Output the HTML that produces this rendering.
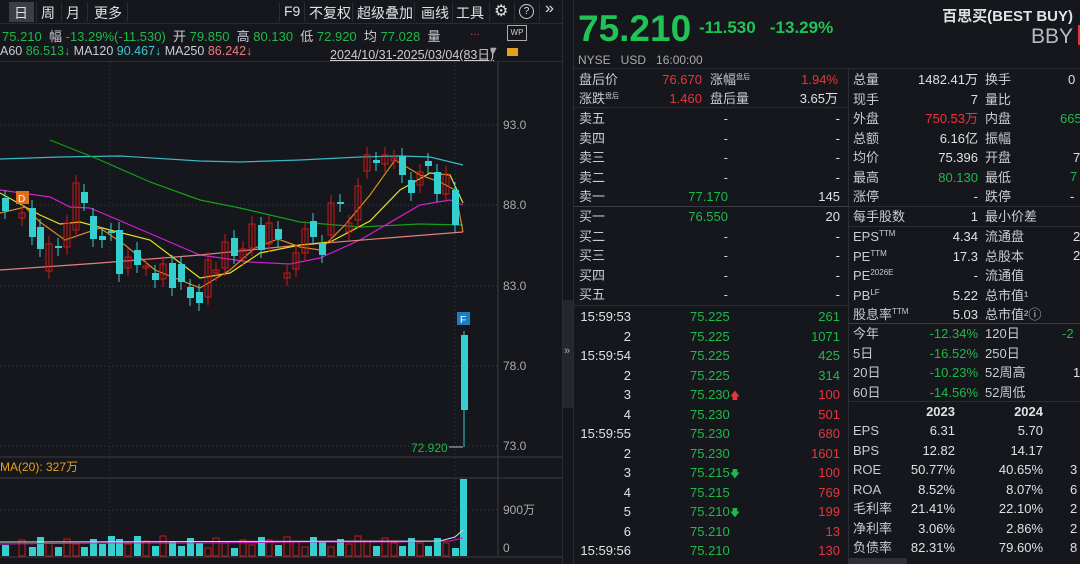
<!DOCTYPE html><html><head><meta charset="utf-8"><style>
body{margin:0;width:1080px;height:564px;background:#15171c;overflow:hidden;font-family:"Liberation Sans","Noto Sans CJK SC",sans-serif;color:#c9ccd1;position:relative}
.a{position:absolute;white-space:nowrap}
.g{color:#1fb84a}.r{color:#e8353b}.w{color:#dfe1e4}
.row{position:absolute;height:19px;font-size:13px;line-height:19px;overflow:visible}
sup{font-size:8px;line-height:0;vertical-align:5px}
.sep{position:absolute;top:2px;width:1px;height:20px;background:#2a2d33}
.tb{position:absolute;top:3px;font-size:14px;color:#dfe1e4}
</style></head><body>
<div class="a" style="left:0;top:0;width:562px;height:23px;background:#15171c;border-bottom:1px solid #2a2d33"></div>
<div class="a" style="left:9px;top:2px;width:25px;height:20px;background:#3a3e46"></div>
<div class="tb" style="left:14px">日</div>
<div class="sep" style="left:36px"></div>
<div class="tb" style="left:41px">周</div>
<div class="sep" style="left:61px"></div>
<div class="tb" style="left:66px">月</div>
<div class="sep" style="left:87px"></div>
<div class="tb" style="left:94px">更多</div>
<div class="sep" style="left:127px"></div>
<div class="sep" style="left:279px"></div>
<div class="tb" style="left:284px">F9</div>
<div class="sep" style="left:304px"></div>
<div class="tb" style="left:309px">不复权</div>
<div class="sep" style="left:352px"></div>
<div class="tb" style="left:357px">超级叠加</div>
<div class="sep" style="left:414px"></div>
<div class="tb" style="left:421px">画线</div>
<div class="sep" style="left:452px"></div>
<div class="tb" style="left:456px">工具</div>
<div class="sep" style="left:489px"></div>
<div class="a w" style="left:494px;top:1px;font-size:16px">⚙</div>
<div class="sep" style="left:514px"></div>
<div class="a w" style="left:519px;top:4px;border:1.5px solid #ccc;border-radius:50%;width:13px;height:13px;line-height:13px;text-align:center;font-size:10px">?</div>
<div class="sep" style="left:539px"></div>
<div class="a w" style="left:545px;top:0px;font-size:16px">»</div>
<div class="a" style="top:26px;left:2px;font-size:13px"><span class="g">75.210</span>&nbsp; 幅 <span class="g">-13.29%(-11.530)</span>&nbsp; 开 <span class="g">79.850</span>&nbsp; 高 <span class="g">80.130</span>&nbsp; 低 <span class="g">72.920</span>&nbsp; 均 <span class="g">77.028</span>&nbsp; 量</div>
<div class="a r" style="left:470px;top:24px;font-size:12px">...</div>
<div class="a" style="left:507px;top:25px;width:18px;height:14px;border:1px solid #aaa;font-size:8px;text-align:center;line-height:13px">WP</div>
<div class="a" style="top:44px;left:0;font-size:12.5px">A60 <span class="g">86.513↓</span> MA120 <span style="color:#3cc8d0">90.467↓</span> MA250 <span style="color:#f07a7a">86.242↓</span></div>
<div class="a" style="top:44px;left:330px;font-size:12.5px;text-decoration:underline;color:#ccc">2024/10/31-2025/03/04(83日)</div>
<div class="a" style="top:45px;left:488px;font-size:11px;color:#aaa">▼</div>
<div class="a" style="top:48px;left:507px;width:11px;height:8px;background:#e0a020"></div>
<div class="a" style="left:0;top:61px;width:562px;height:1px;background:#2a2d33"></div>
<svg class="a" style="left:0;top:62px" width="562" height="502" viewBox="0 62 562 502">
<g stroke="#3a3d44" stroke-dasharray="1,3">
<line x1="0" y1="125" x2="498" y2="125"/><line x1="0" y1="205" x2="498" y2="205"/><line x1="0" y1="286" x2="498" y2="286"/><line x1="0" y1="366" x2="498" y2="366"/><line x1="0" y1="446" x2="498" y2="446"/><line x1="0" y1="510" x2="498" y2="510"/>
<line x1="110" y1="62" x2="110" y2="556"/><line x1="455" y1="62" x2="455" y2="556"/>
</g>
<line x1="498" y1="62" x2="498" y2="556" stroke="#3a3d44"/>
<line x1="0" y1="457" x2="562" y2="457" stroke="#3a3d44"/>
<line x1="0" y1="478" x2="562" y2="478" stroke="#3a3d44"/>
<line x1="0" y1="557" x2="562" y2="557" stroke="#3a3d44"/>
<g fill="none" stroke-width="1.2">
<polyline stroke="#3cb8c4" points="0,159 60,157 120,156 200,161 240,162 300,160 360,157 400,156 430,157 463,165"/>
<polyline stroke="#14a014" points="50,140 100,160 150,182 200,200 240,208 300,222 360,227 420,224 463,225"/>
<polyline stroke="#d020d0" points="0,190 50,197 70,207 90,208 130,225 200,255 250,262 290,264 320,258 360,240 420,205 450,200 463,205"/>
<polyline stroke="#e08080" points="0,270 100,263 200,255 300,245 400,237 463,232"/>
<polyline stroke="#e8e020" points="0,193 40,215 60,224 80,222 110,230 150,240 200,278 230,273 260,253 300,245 330,242 370,221 400,190 430,173 450,175 463,203"/>
<polyline stroke="#e08a20" points="0,213 25,207 40,222 65,240 100,228 125,245 155,270 200,288 230,270 255,248 278,239 300,247 320,250 345,225 370,195 395,160 420,175 440,182 455,190 463,232"/>
</g>
<g id="c" stroke-width="1"></g>
<rect x="16" y="191" width="13" height="13" fill="#e07020"/><text x="18" y="202" font-size="10" fill="#fff" font-family="Liberation Sans">D</text>
<rect x="457" y="312" width="13" height="13" fill="#1a7fc0"/><text x="460" y="323" font-size="10" fill="#fff" font-family="Liberation Sans">F</text>
<line x1="464" y1="331" x2="464" y2="447" stroke="#30c8c8"/><rect x="461" y="335" width="7" height="75" fill="#36cfcf"/>
<text x="411" y="452" font-size="12" fill="#1fb84a" font-family="Liberation Sans">72.920</text><line x1="449" y1="447" x2="463" y2="447" stroke="#bbb"/>
<g font-size="12" fill="#aaa" font-family="Liberation Sans"><text x="503" y="129">93.0</text><text x="503" y="209">88.0</text><text x="503" y="290">83.0</text><text x="503" y="370">78.0</text><text x="503" y="450">73.0</text><text x="503" y="514">900万</text><text x="503" y="552">0</text></g>
<text x="0" y="471" font-size="12" fill="#e8a020" font-family="Liberation Sans, Noto Sans CJK SC">MA(20): 327万</text>
<g id="v"></g>
<rect x="460" y="479" width="7" height="77" fill="#36cfcf"/>
<polyline fill="none" stroke="#d020d0" points="0,544 100,543 200,543 300,542 400,542 450,541 463,538"/>
<polyline fill="none" stroke="#ddd" points="0,542 440,541 455,537 463,530"/>
</svg>
<script>
var C=[[5,1,198,211],[22,0,213,218],[32,1,208,237],[40,1,227,249],[49,0,244,271],[58,1,246,248],[67,0,223,247],[76,0,183,230],[84,1,192,203],[93,1,216,239],[102,1,236,240],[111,1,231,233],[119,1,230,274],[128,0,257,268],[137,1,250,265],[146,0,266,268],[155,1,273,280],[163,0,264,279],[172,1,263,288],[181,1,264,282],[190,1,287,298],[199,1,292,303],[208,0,260,297],[216,0,270,273],[225,0,242,268],[234,1,238,256],[243,0,249,258],[252,0,224,248],[261,1,225,250],[269,0,223,244],[278,1,229,239],[287,0,273,278],[296,0,253,269],[305,0,229,253],[313,1,221,237],[322,1,243,255],[331,0,203,235],[340,1,202,204],[349,0,223,232],[358,0,186,220],[367,0,155,171],[376,1,160,163],[385,0,155,164],[394,0,158,161],[402,1,156,175],[411,1,180,193],[420,0,172,185],[428,1,161,166],[437,1,172,194],[446,0,174,194],[455,1,190,225]];
var s='',v='';
C.forEach(function(c){var x=c[0],up=c[1],col=up?'#36cfcf':'#d01818';
s+='<line x1="'+x+'" x2="'+x+'" y1="'+(c[2]-8)+'" y2="'+(c[3]+8)+'" stroke="'+col+'"/>';
if(up)s+='<rect x="'+(x-3)+'" y="'+c[2]+'" width="7" height="'+Math.max(1,c[3]-c[2])+'" fill="'+col+'"/>';
else s+='<rect x="'+(x-3)+'" y="'+c[2]+'" width="6" height="'+Math.max(1,c[3]-c[2])+'" fill="none" stroke="'+col+'"/>';
var h=8+((x*37)%13);
if(up)v+='<rect x="'+(x-3)+'" y="'+(556-h)+'" width="7" height="'+h+'" fill="#36cfcf"/>';
else v+='<rect x="'+(x-3)+'" y="'+(556-h)+'" width="6" height="'+h+'" fill="none" stroke="#d01818"/>';});
document.getElementById('c').innerHTML=s;document.getElementById('v').innerHTML=v;
</script>
<div class="a" style="left:562px;top:0;width:1px;height:564px;background:#2a2d33"></div>
<div class="a" style="left:563px;top:300px;width:10px;height:108px;background:#24272d"></div>
<div class="a" style="left:564px;top:345px;font-size:11px;color:#aaa">»</div>
<div class="a" style="left:573px;top:0;width:1px;height:564px;background:#2a2d33"></div>
<div class="a g" style="left:578px;top:8px;font-size:37px;font-weight:bold;color:#1fc455">75.210</div>
<div class="a" style="left:699px;top:18px;font-size:17px;font-weight:bold;color:#1fc455">-11.530&nbsp;&nbsp; -13.29%</div>
<div class="a w" style="right:7px;top:5px;font-size:15px;font-weight:bold">百思买(BEST BUY)</div>
<div class="a" style="right:7px;top:25px;font-size:21px;color:#b8bbc0">BBY</div>
<div class="a" style="left:1078px;top:25px;width:2px;height:20px;background:#e8353b"></div>
<div class="a" style="left:578px;top:53px;font-size:12px;color:#aaa">NYSE&nbsp;&nbsp; USD&nbsp;&nbsp; 16:00:00</div>
<div class="a" style="left:574px;top:68px;width:506px;height:1px;background:#2a2d33"></div>
<div class="a" style="left:848px;top:69px;width:1px;height:495px;background:#2a2d33"></div>
<div id="ob"></div>
<div id="st"></div>
<script>
function R(x,y,w,t,cls,al){return '<div class="row '+(cls||'')+'" style="left:'+x+'px;top:'+y+'px;width:'+w+'px;text-align:'+(al||'left')+'">'+t+'</div>';}
var o='';
o+=R(579,70,60,'盘后价')+R(640,70,62,'76.670','r','right')+R(710,70,60,'涨幅<sup style="font-size:7px">盘后</sup>')+R(770,70,68,'1.94%','r','right');
o+=R(579,89,60,'涨跌<sup style="font-size:7px">盘后</sup>')+R(640,89,62,'1.460','r','right')+R(710,89,60,'盘后量')+R(770,89,68,'3.65万','w','right');
o+='<div class="a" style="left:574px;top:107px;width:274px;height:1px;background:#2a2d33"></div>';
var sl=['卖五','卖四','卖三','卖二','卖一'];
sl.forEach(function(n,i){var y=109+i*19.5;o+=R(579,y,50,n)+R(640,y,88,i==4?'<span class="g">77.170</span>':'-','','right')+R(760,y,80,i==4?'145':'-','w','right');});
o+='<div class="a" style="left:574px;top:206px;width:274px;height:1px;background:#3a3d44"></div>';
var bl=['买一','买二','买三','买四','买五'];
bl.forEach(function(n,i){var y=207+i*19.5;o+=R(579,y,50,n)+R(640,y,88,i==0?'<span class="g">76.550</span>':'-','','right')+R(760,y,80,i==0?'20':'-','w','right');});
o+='<div class="a" style="left:574px;top:305px;width:274px;height:1px;background:#2a2d33"></div>';
var T=[['15:59:53','75.225','261','g',''],['2','75.225','1071','g',''],['15:59:54','75.225','425','g',''],['2','75.225','314','g',''],['3','75.230','100','r','<span class="r" style="font-size:10px">🡅</span>'],['4','75.230','501','r',''],['15:59:55','75.230','680','r',''],['2','75.230','1601','r',''],['3','75.215','100','r','<span class="g" style="font-size:10px">🡇</span>'],['4','75.215','769','r',''],['5','75.210','199','r','<span class="g" style="font-size:10px">🡇</span>'],['6','75.210','13','r',''],['15:59:56','75.210','130','r','']];
T.forEach(function(t,i){var y=307+i*19.5;o+=R(579,y,52,t[0],'w','right')+R(690,y,60,'<span class="g">'+t[1]+'</span>'+t[4])+R(760,y,80,t[2],t[3],'right');});
document.getElementById('ob').innerHTML=o;
var s='';
var A=[['总量','1482.41万','w','换手'],['现手','7','w','量比'],['外盘','750.53万','r','内盘'],['总额','6.16亿','w','振幅'],['均价','75.396','w','开盘'],['最高','80.130','g','最低'],['涨停','-','w','跌停']];
A.forEach(function(a,i){var y=70+i*19.5;s+=R(853,y,50,a[0])+R(900,y,78,a[1],a[2],'right')+R(985,y,50,a[3]);});
s+=R(1068,70,20,'0','w')+R(1060,109,30,'665','g')+R(1073,148,20,'7','w')+R(1070,167,20,'7','g')+R(1070,187,20,'-','w');
s+='<div class="a" style="left:849px;top:206px;width:231px;height:1px;background:#2a2d33"></div>';
s+=R(853,207,70,'每手股数')+R(900,207,78,'1','w','right')+R(985,207,60,'最小价差');
s+='<div class="a" style="left:849px;top:226px;width:231px;height:1px;background:#2a2d33"></div>';
var B=[['EPS<sup>TTM</sup>','4.34','流通盘'],['PE<sup>TTM</sup>','17.3','总股本'],['PE<sup>2026E</sup>','-','流通值'],['PB<sup>LF</sup>','5.22','总市值¹'],['股息率<sup>TTM</sup>','5.03','总市值²ⓘ']];
B.forEach(function(a,i){var y=227+i*19.5;s+=R(853,y,70,a[0])+R(900,y,78,a[1],'w','right')+R(985,y,80,a[2]);});
s+=R(1073,227,20,'2','w')+R(1073,246,20,'2','w');
s+='<div class="a" style="left:849px;top:323px;width:231px;height:1px;background:#3a3d44"></div>';
var D=[['今年','-12.34%','120日'],['5日','-16.52%','250日'],['20日','-10.23%','52周高'],['60日','-14.56%','52周低']];
D.forEach(function(a,i){var y=324+i*19.5;s+=R(853,y,50,a[0])+R(900,y,78,a[1],'g','right')+R(985,y,60,a[2]);});
s+=R(1062,324,30,'-2','g')+R(1073,363,20,'1','w');
s+='<div class="a" style="left:849px;top:401px;width:231px;height:1px;background:#2a2d33"></div>';
s+=R(900,402,55,'<b>2023</b>','w','right')+R(975,402,68,'<b>2024</b>','w','right');
var F=[['EPS','6.31','5.70',''],['BPS','12.82','14.17',''],['ROE','50.77%','40.65%','3'],['ROA','8.52%','8.07%','6'],['毛利率','21.41%','22.10%','2'],['净利率','3.06%','2.86%','2'],['负债率','82.31%','79.60%','8']];
F.forEach(function(a,i){var y=421+i*19.5;s+=R(853,y,50,a[0])+R(880,y,75,a[1],'w','right')+R(960,y,83,a[2],'w','right')+R(1070,y,15,a[3],'w');});
s+='<div class="a" style="left:849px;top:558px;width:58px;height:6px;background:#2c2f36"></div>';
document.getElementById('st').innerHTML=s;
</script>
</body></html>
